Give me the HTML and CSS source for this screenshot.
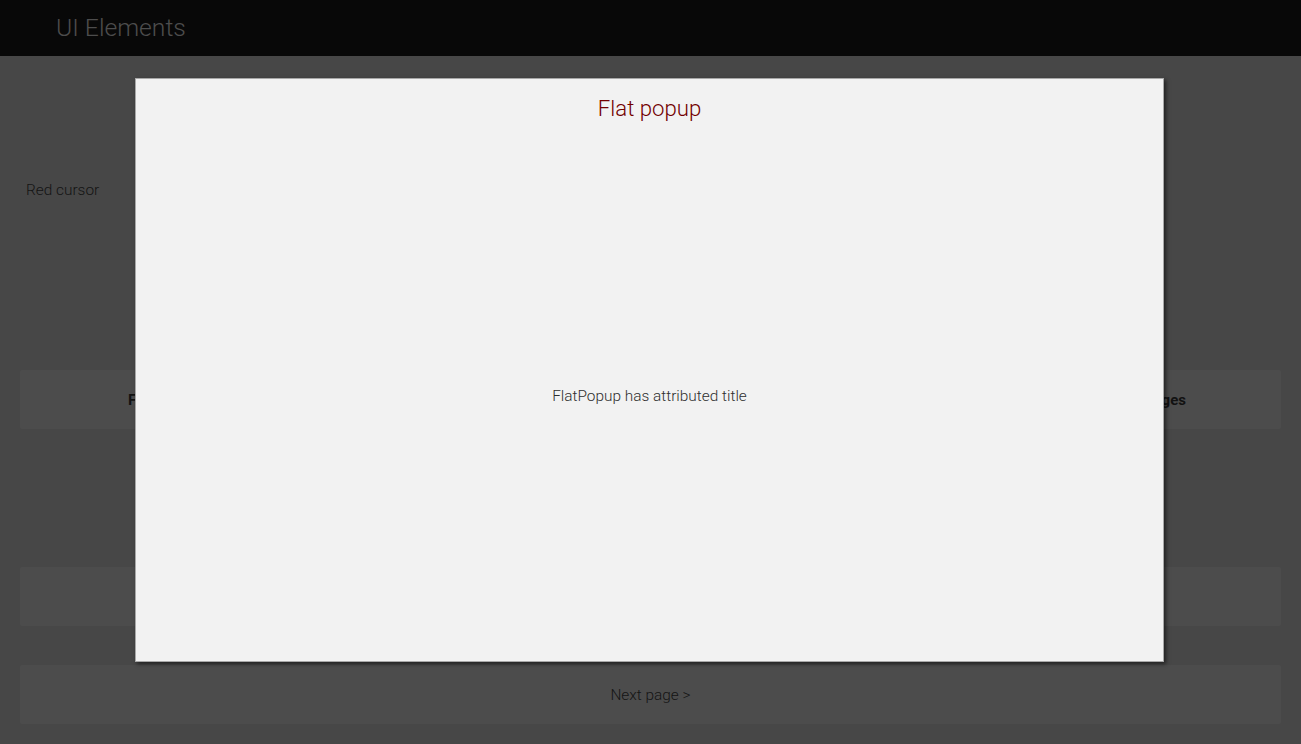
FILE: index.html
```html
<!DOCTYPE html>
<html>
<head>
<meta charset="utf-8">
<link rel="stylesheet" href="styles.css">
</head>
<body>
<header class="appbar"><span class="appbar-title">UI Elements</span></header>
<main class="content">
  <div class="row row-cursor"><span class="label">Red cursor</span></div>
  <div class="row row-pair">
    <div class="btn btn-bold">Flat popup</div>
    <div class="btn btn-bold">Popup with images</div>
  </div>
  <div class="btn btn-wide row-blank"></div>
  <div class="btn btn-wide row-next">Next page &gt;</div>
</main>
<div class="popup">
  <h1 class="popup-title">Flat popup</h1>
  <div class="popup-body">FlatPopup has attributed title</div>
</div>
</body>
</html>
```
FILE: styles.css
```css
* { box-sizing: border-box; }
html, body { margin: 0; padding: 0; }
body {
  width: 1301px;
  height: 744px;
  overflow: hidden;
  background: #474747;
  font-family: Roboto, "Liberation Sans", sans-serif;
  font-weight: 300;
  position: relative;
}
.appbar {
  height: 56px;
  background: #080808;
  display: flex;
  align-items: center;
  padding-left: 56px;
}
.appbar-title {
  color: #4d4d4d;
  font-size: 24.7px;
  line-height: 1;
  margin-top: 1px;
}
.content {
  display: flex;
  flex-direction: column;
  padding: 0 20px;
}
.row-cursor {
  height: 70px;
  margin-top: 99px;
  display: flex;
  align-items: center;
  padding-left: 6px;
}
.label {
  color: #141414;
  font-size: 15.4px;
}
.row-pair {
  margin-top: 145px;
  display: flex;
  gap: 20px;
}
.btn {
  background: #4c4c4c;
  border-radius: 2px;
  height: 59px;
  display: flex;
  align-items: center;
  justify-content: center;
  color: #141414;
  font-size: 15.4px;
}
.row-pair .btn { flex: 1; }
.btn-bold {
  font-weight: bold;
  font-size: 15px;
  color: #121212;
}
.row-pair .btn:first-child { justify-content: flex-start; padding-left: 108px; }
.row-pair .btn:last-child { justify-content: flex-end; padding-right: 95px; }
.row-blank { margin-top: 138px; }
.row-next { margin-top: 39px; }
.popup {
  position: absolute;
  left: 135px;
  top: 78px;
  width: 1029px;
  height: 584px;
  background: #f2f2f2;
  border: 1px solid #a8a8a8;
  box-shadow: 2px 2px 4px rgba(0,0,0,0.55);
  display: flex;
  flex-direction: column;
  align-items: center;
}
.popup-title {
  margin: 16px 0 0;
  font-weight: 300;
  font-size: 22.2px;
  line-height: 26px;
  color: #720000;
}
.popup-body {
  flex: 1;
  display: flex;
  align-items: center;
  color: #2e2e2e;
  font-size: 15.4px;
  padding-top: 10px;
}
```
